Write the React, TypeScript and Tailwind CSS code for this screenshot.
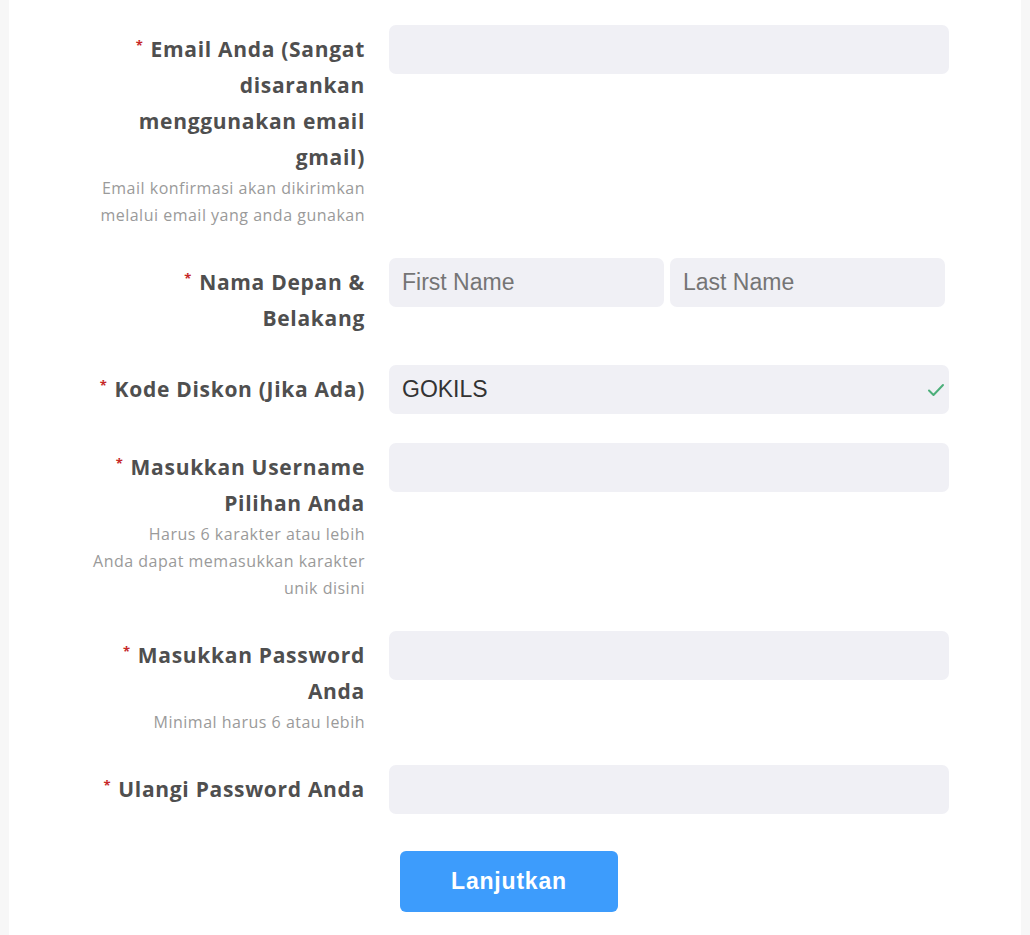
import { useState } from 'react';

const labelFont = { fontFamily: '"Open Sans", Lato, sans-serif' };
const inputFont = { fontFamily: '"Liberation Sans", Arial, sans-serif' };

// label lines are broken by hand so the wrap follows the original design
function Label({ lines, help }: { lines: string[]; help?: string[] }) {
    return (
        <div className="text-right pt-[6px]" style={labelFont}>
            <div className="text-[21px] leading-[36px] font-bold tracking-[0.7px] text-[#4f4f4f] whitespace-nowrap">
                {lines.map((line, i) => (
                    <div key={line}>
                        {i === 0 && (
                            <span className="inline-block align-top text-[#c62828] text-[13px] leading-[28px] mr-[7px]">*</span>
                        )}
                        {line}
                    </div>
                ))}
            </div>
            {help && (
                <div className="text-[16px] leading-[27px] tracking-[0.5px] text-[#9a9a9a] whitespace-nowrap">
                    {help.map((line) => (
                        <div key={line}>{line}</div>
                    ))}
                </div>
            )}
        </div>
    );
}

const inputCls =
    'w-full h-[49px] rounded-[7px] bg-[#f0f0f5] px-[13px] text-[23px] text-[#333] placeholder:text-[#757575] outline-none';

export default function App() {
    const [values, setValues] = useState({
        email: '',
        first: '',
        last: '',
        kode: 'GOKILS',
        username: '',
        password: '',
        password2: '',
    });

    const set = (key: keyof typeof values) => (e: React.ChangeEvent<HTMLInputElement>) =>
        setValues((prev) => ({ ...prev, [key]: e.target.value }));

    return (
        <div className="min-h-screen bg-[#f7f7f7] px-[9px] flex">
            <div className="flex-1 bg-white pt-[25px] pl-[61px] pb-[30px]">
                <form className="grid grid-cols-[295px_560px] gap-x-6 gap-y-[29px]" onSubmit={(e) => e.preventDefault()}>
                    {/* Email */}
                    <Label
                        lines={['Email Anda (Sangat', 'disarankan', 'menggunakan email', 'gmail)']}
                        help={['Email konfirmasi akan dikirimkan', 'melalui email yang anda gunakan']}
                    />
                    <div>
                        <input type="email" className={inputCls} style={inputFont} value={values.email} onChange={set('email')} />
                    </div>

                    {/* Nama */}
                    <Label lines={['Nama Depan &', 'Belakang']} />
                    <div className="grid grid-cols-2 gap-[6px] mr-[4px] self-start">
                        <input className={inputCls} style={inputFont} placeholder="First Name" value={values.first} onChange={set('first')} />
                        <input className={inputCls} style={inputFont} placeholder="Last Name" value={values.last} onChange={set('last')} />
                    </div>

                    {/* Kode diskon */}
                    <Label lines={['Kode Diskon (Jika Ada)']} />
                    <div className="relative h-[49px]">
                        <input className={inputCls + ' pr-10'} style={inputFont} value={values.kode} onChange={set('kode')} />
                        <svg className="absolute right-[3px] top-[16px]" width="20" height="18" viewBox="0 0 20 18" fill="none">
                            <path d="M3 9.5l4.5 4.5L17 4" stroke="#4caf7a" strokeWidth="2" strokeLinecap="round" strokeLinejoin="round" />
                        </svg>
                    </div>

                    {/* Username */}
                    <Label
                        lines={['Masukkan Username', 'Pilihan Anda']}
                        help={['Harus 6 karakter atau lebih', 'Anda dapat memasukkan karakter', 'unik disini']}
                    />
                    <div>
                        <input className={inputCls} style={inputFont} value={values.username} onChange={set('username')} />
                    </div>

                    {/* Password */}
                    <Label lines={['Masukkan Password', 'Anda']} help={['Minimal harus 6 atau lebih']} />
                    <div>
                        <input type="password" className={inputCls} style={inputFont} value={values.password} onChange={set('password')} />
                    </div>

                    {/* Ulangi password */}
                    <Label lines={['Ulangi Password Anda']} />
                    <div>
                        <input type="password" className={inputCls} style={inputFont} value={values.password2} onChange={set('password2')} />
                    </div>

                    <div />
                    <div className="pt-[8px] pl-[11px]">
                        <button
                            type="submit"
                            className="w-[218px] h-[61px] rounded-[6px] bg-[#3d9cfc] text-white text-[23px] tracking-[0.8px] font-bold"
                            style={inputFont}
                        >
                            Lanjutkan
                        </button>
                    </div>
                </form>
            </div>
        </div>
    );
}
